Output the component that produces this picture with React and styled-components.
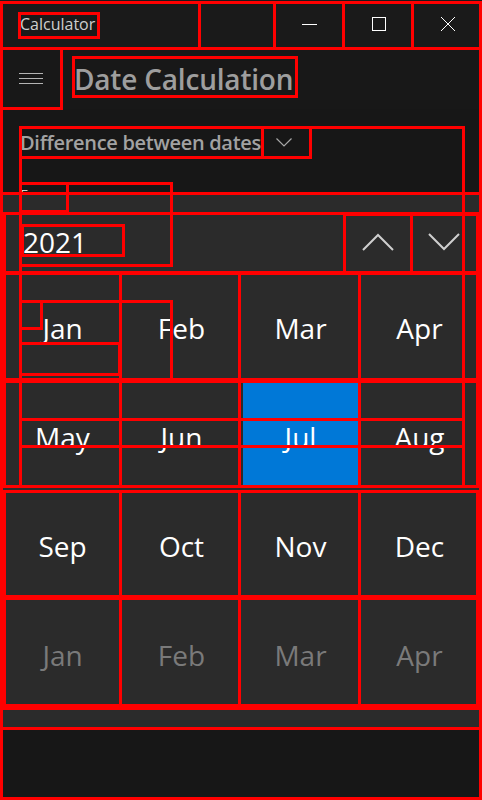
import styled, { createGlobalStyle } from "styled-components";

const GlobalStyle = createGlobalStyle`
  html, body {
    margin: 0;
    padding: 0;
    background: #161616;
  }
`;

// the red outlines drawn over the screenshot: [left, top, right, bottom]
const marks = [
  [0, 1, 201, 50],
  [198, 1, 276, 50],
  [273, 1, 345, 50],
  [342, 1, 414, 50],
  [411, 1, 482, 50],
  [18, 12, 100, 39],
  [0, 47, 482, 800],
  [0, 47, 63, 110],
  [72, 56, 298, 98],
  [19, 126, 264, 159],
  [261, 126, 312, 159],
  [19, 126, 465, 488],
  [0, 192, 482, 730],
  [19, 182, 69, 213],
  [19, 182, 173, 267],
  [0, 212, 482, 710],
  [3, 212, 346, 274],
  [343, 213, 413, 274],
  [410, 213, 479, 274],
  [21, 224, 125, 257],
  [19, 300, 173, 381],
  [19, 300, 43, 330],
  [19, 342, 121, 376],
  [19, 418, 465, 448],
  [0, 707, 482, 730],
];

const cols = [
  [3, 122],
  [119, 241],
  [238, 361],
  [358, 479],
];
const rows = [
  [272, 381],
  [380, 488],
  [490, 598],
  [597, 707],
];
rows.forEach(([t, b]) => cols.forEach(([l, r]) => marks.push([l, t, r, b])));

const months = [
  "Jan", "Feb", "Mar", "Apr",
  "May", "Jun", "Jul", "Aug",
  "Sep", "Oct", "Nov", "Dec",
  "Jan", "Feb", "Mar", "Apr",
];

export default function App() {
  return (
    <Window>
      <GlobalStyle />
      <TitleBar>
        <AppName>Calculator</AppName>
        <CaptionButton>
          <svg width="16" height="16" viewBox="0 0 16 16">
            <line x1="0" y1="8.5" x2="15" y2="8.5" stroke="#fff" strokeWidth="1" />
          </svg>
        </CaptionButton>
        <CaptionButton>
          <svg width="16" height="16" viewBox="0 0 16 16">
            <rect x="1.5" y="1.5" width="13" height="13" fill="none" stroke="#fff" strokeWidth="1" />
          </svg>
        </CaptionButton>
        <CaptionButton>
          <svg width="16" height="16" viewBox="0 0 16 16">
            <path d="M1 1 L15 15 M15 1 L1 15" stroke="#fff" strokeWidth="1" />
          </svg>
        </CaptionButton>
      </TitleBar>

      <Header>
        <MenuButton>
          <svg width="24" height="12" viewBox="0 0 24 12">
            <path d="M0 0.5 H24 M0 5.5 H24 M0 10.5 H24" stroke="#b4b4b4" strokeWidth="1" />
          </svg>
        </MenuButton>
        <PageTitle>Date Calculation</PageTitle>
      </Header>

      <Content>
        <ModeSelect>
          Difference between dates
          <svg width="16" height="9" viewBox="0 0 16 9">
            <path d="M0.5 0.5 L8 8 L15.5 0.5" fill="none" stroke="#a8a8a8" strokeWidth="1.2" />
          </svg>
        </ModeSelect>
        <FieldLabel>From</FieldLabel>
        <DateButton />
      </Content>

      <Flyout>
        <YearRow>
          <YearButton>2021</YearButton>
          <StepButton>
            <svg width="32" height="18" viewBox="0 0 32 18">
              <path d="M1 17 L16 2 L31 17" fill="none" stroke="#cfcfcf" strokeWidth="2" />
            </svg>
          </StepButton>
          <StepButton>
            <svg width="32" height="18" viewBox="0 0 32 18">
              <path d="M1 1 L16 16 L31 1" fill="none" stroke="#cfcfcf" strokeWidth="2" />
            </svg>
          </StepButton>
        </YearRow>
        <MonthGrid>
          {months.map((m, i) => (
            <MonthCell key={i} $selected={i === 6} $muted={i >= 12}>
              {m}
            </MonthCell>
          ))}
        </MonthGrid>
      </Flyout>

      <Marks>
        {marks.map(([l, t, r, b], i) => (
          <Mark
            key={i}
            style={{ left: l, top: t, width: r - l, height: b - t }}
          />
        ))}
      </Marks>
    </Window>
  );
}

const Window = styled.div`
  position: relative;
  width: 482px;
  height: 800px;
  overflow: hidden;
  background: #161616;
  font-family: "Open Sans", "Noto Sans", sans-serif;
  display: flex;
  flex-direction: column;
`;

const TitleBar = styled.div`
  display: flex;
  align-items: center;
  height: 48px;
  background: #1a1a1a;
  flex-shrink: 0;
`;

const AppName = styled.div`
  flex: 1;
  padding-left: 20px;
  font-size: 16px;
  color: #cfcfcf;
`;

const CaptionButton = styled.div`
  width: 69px;
  height: 48px;
  display: flex;
  align-items: center;
  justify-content: center;
`;

const Header = styled.div`
  display: flex;
  align-items: center;
  height: 61px;
  background: #181818;
`;

const MenuButton = styled.div`
  width: 62px;
  height: 61px;
  display: flex;
  align-items: center;
  justify-content: center;
`;

const PageTitle = styled.div`
  margin-left: 12px;
  font-size: 28px;
  font-weight: 600;
  color: #9e9e9e;
  letter-spacing: -0.2px;
`;

const Content = styled.div`
  flex: 1;
  padding: 18px 20px 0;
  background: #171717;
`;

const ModeSelect = styled.div`
  display: inline-flex;
  align-items: center;
  gap: 15px;
  height: 31px;
  font-size: 20px;
  font-weight: 600;
  color: #a2a2a2;
  letter-spacing: -0.3px;
`;

const FieldLabel = styled.div`
  margin-top: 26px;
  font-size: 15px;
  color: #d0d0d0;
`;

const DateButton = styled.div`
  margin-top: 8px;
  width: 300px;
  height: 32px;
  background: #2b2b2b;
`;

const Flyout = styled.div`
  position: absolute;
  top: 192px;
  left: 1px;
  right: 2px;
  height: 536px;
  box-sizing: border-box;
  background: #2b2b2b;
  border: 1px solid #767676;
  padding-top: 20px;
  display: flex;
  flex-direction: column;
`;

const YearRow = styled.div`
  display: flex;
  height: 58px;
  padding-right: 2px;
`;

const YearButton = styled.div`
  flex: 1;
  display: flex;
  align-items: center;
  padding-left: 21px;
  font-size: 28px;
  color: #fff;
`;

const StepButton = styled.div`
  width: 66px;
  display: flex;
  align-items: center;
  justify-content: center;
`;

const MonthGrid = styled.div`
  margin-top: 3px;
  padding: 0 2px 0 3px;
  display: grid;
  grid-template-columns: repeat(4, 1fr);
  grid-auto-rows: 104px;
  gap: 5px 4px;
`;

const MonthCell = styled.div`
  display: flex;
  align-items: center;
  justify-content: center;
  padding-top: 4px;
  background: ${(p) => (p.$selected ? "#0078d7" : "#2b2b2b")};
  color: ${(p) => (p.$muted ? "#7a7a7a" : "#fff")};
  font-size: 28px;
`;

const Marks = styled.div`
  position: absolute;
  inset: 0;
  pointer-events: none;
`;

const Mark = styled.div`
  position: absolute;
  box-sizing: border-box;
  border: 3px solid #ff0000;
`;
